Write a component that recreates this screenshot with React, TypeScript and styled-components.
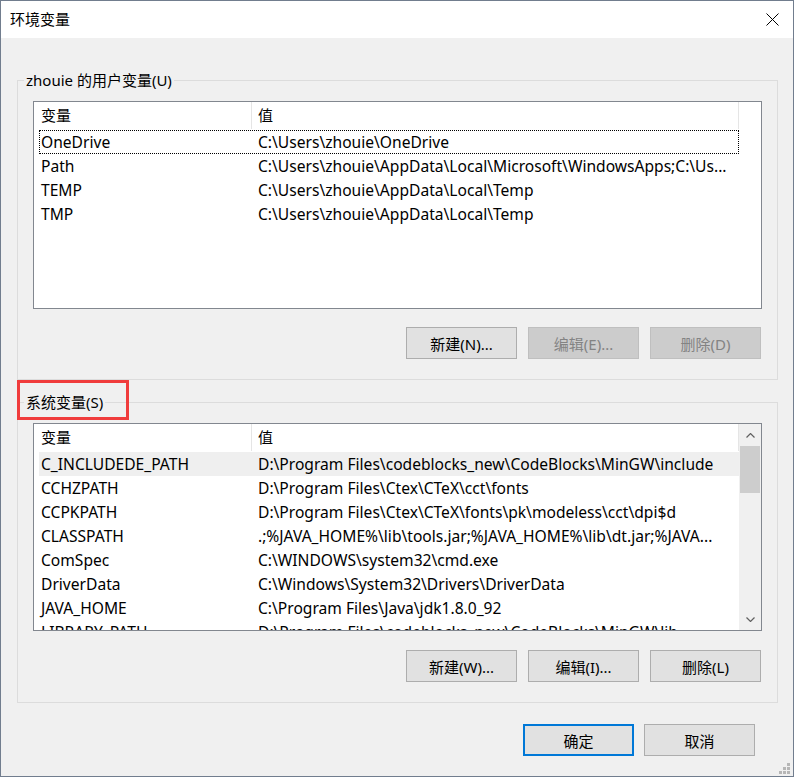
import React from "react";
import styled, { createGlobalStyle, css } from "styled-components";

const Global = createGlobalStyle`
  html, body { margin: 0; padding: 0; background: #f0f0f0; }
  body {
    font-family: "Noto Sans", "Noto Sans CJK SC", sans-serif;
    font-size: 15px;
    color: #000;
  }
  *, *::before, *::after { box-sizing: border-box; }
`;

const Window = styled.div`
  position: relative;
  width: 794px;
  height: 777px;
  border: 1px solid #717d8e;
  background: #f0f0f0;
  display: flex;
  flex-direction: column;
  overflow: hidden;
`;

const TitleBar = styled.div`
  height: 37px;
  flex: none;
  background: #fff;
  display: flex;
  align-items: center;
  justify-content: space-between;
  padding-left: 9px;
`;

const Title = styled.div`
  font-size: 15px;
  line-height: 20px;
  padding-bottom: 1px;
`;

const CloseBox = styled.div`
  width: 41px;
  height: 37px;
  display: flex;
  align-items: center;
  justify-content: center;
  padding-bottom: 1px;
`;

const Body = styled.div`
  flex: 1;
  display: flex;
  flex-direction: column;
  padding: 32px 15px 0 16px;
`;

const Group = styled.fieldset<{ $mt?: number }>`
  margin: ${(p) => p.$mt ?? 0}px 0 0 0;
  padding: 0;
  min-inline-size: 0;
  border: 1px solid #dcdcdc;
`;

const Legend = styled.legend<{ $marked?: boolean }>`
  position: relative;
  margin-left: 6px;
  padding: 0 2px;
  font-size: 15px;
  line-height: 20px;
  ${(p) =>
    p.$marked &&
    css`
      &::after {
        content: "";
        position: absolute;
        left: -7px;
        top: -12px;
        width: 112px;
        height: 40px;
        border: 3px solid #f03c3c;
      }
    `}
`;

const GroupContent = styled.div`
  padding: 11px 15px 20px 15px;
  display: flex;
  flex-direction: column;
`;

const ListView = styled.div`
  height: 208px;
  border: 1px solid #82878f;
  background: #fff;
  display: flex;
  overflow: hidden;
`;

const ListMain = styled.div`
  flex: 1;
  display: flex;
  flex-direction: column;
  overflow: hidden;
`;

const Header = styled.div`
  height: 27px;
  flex: none;
  display: flex;
`;

const HeaderCell = styled.div<{ $w: number; $pl: number }>`
  width: ${(p) => p.$w}px;
  padding-left: ${(p) => p.$pl}px;
  border-right: 1px solid #e5e5e5;
  line-height: 26px;
  white-space: nowrap;
`;

const HeaderGap = styled.div`
  height: 1px;
  flex: none;
`;

const Row = styled.div<{ $focused?: boolean; $selected?: boolean }>`
  flex: none;
  margin-left: 5px;
  width: 700px;
  height: 24px;
  display: flex;
  align-items: center;
  white-space: nowrap;
  font-size: 15.6px;
  line-height: 22px;
  padding-bottom: 1px;
  background: ${(p) => (p.$selected ? "#efefef" : "transparent")};
  ${(p) =>
    p.$focused &&
    css`
      outline: 1px dotted #000;
      outline-offset: -1px;
    `}
`;

const NameCell = styled.div`
  width: 219px;
  flex: none;
  padding-left: 2px;
  overflow: hidden;
`;

const ValueCell = styled.div`
  flex: 1;
  overflow: hidden;
`;

const ScrollBar = styled.div`
  width: 22px;
  flex: none;
  background: #f0f0f0;
  display: flex;
  flex-direction: column;
`;

const ArrowBox = styled.div`
  height: 22px;
  flex: none;
  display: flex;
  align-items: center;
  justify-content: center;
`;

const Track = styled.div`
  flex: 1;
  padding: 0 1px;
`;

const Thumb = styled.div`
  height: 47px;
  background: #cdcdcd;
`;

const ButtonRow = styled.div<{ $mt: number }>`
  margin-top: ${(p) => p.$mt}px;
  padding-right: 1px;
  display: flex;
  justify-content: flex-end;
  gap: 11px;
`;

const Button = styled.div<{ $disabled?: boolean; $default?: boolean }>`
  width: 111px;
  height: 32px;
  display: flex;
  align-items: center;
  justify-content: center;
  background: ${(p) => (p.$disabled ? "#cccccc" : "#e1e1e1")};
  border: ${(p) =>
    p.$default ? "2px solid #0078d7" : p.$disabled ? "1px solid #bfbfbf" : "1px solid #adadad"};
  color: ${(p) => (p.$disabled ? "#838383" : "#000")};
  font-size: 15px;
  white-space: nowrap;
`;

const Footer = styled.div`
  margin-top: 21px;
  margin-right: 23px;
  display: flex;
  justify-content: flex-end;
  gap: 10px;
`;

const Grip = styled.div`
  position: absolute;
  right: 3px;
  bottom: 2px;
  width: 11px;
  height: 11px;
  display: flex;
`;

type Item = { name: string; value: string };

const userVars: Item[] = [
  { name: "OneDrive", value: "C:\\Users\\zhouie\\OneDrive" },
  { name: "Path", value: "C:\\Users\\zhouie\\AppData\\Local\\Microsoft\\WindowsApps;C:\\Us..." },
  { name: "TEMP", value: "C:\\Users\\zhouie\\AppData\\Local\\Temp" },
  { name: "TMP", value: "C:\\Users\\zhouie\\AppData\\Local\\Temp" },
];

const sysVars: Item[] = [
  { name: "C_INCLUDEDE_PATH", value: "D:\\Program Files\\codeblocks_new\\CodeBlocks\\MinGW\\include" },
  { name: "CCHZPATH", value: "D:\\Program Files\\Ctex\\CTeX\\cct\\fonts" },
  { name: "CCPKPATH", value: "D:\\Program Files\\Ctex\\CTeX\\fonts\\pk\\modeless\\cct\\dpi$d" },
  { name: "CLASSPATH", value: ".;%JAVA_HOME%\\lib\\tools.jar;%JAVA_HOME%\\lib\\dt.jar;%JAVA..." },
  { name: "ComSpec", value: "C:\\WINDOWS\\system32\\cmd.exe" },
  { name: "DriverData", value: "C:\\Windows\\System32\\Drivers\\DriverData" },
  { name: "JAVA_HOME", value: "C:\\Program Files\\Java\\jdk1.8.0_92" },
  { name: "LIBRARY_PATH", value: "D:\\Program Files\\codeblocks_new\\CodeBlocks\\MinGW\\lib" },
];

const Chevron = ({ up }: { up?: boolean }) => (
  <svg width="9" height="5" viewBox="0 0 9 5">
    <polyline
      points={up ? "0.5,4.5 4.5,0.5 8.5,4.5" : "0.5,0.5 4.5,4.5 8.5,0.5"}
      fill="none"
      stroke="#606060"
      strokeWidth="1.2"
    />
  </svg>
);

const List = ({
  items,
  focused,
  selected,
  scroll,
}: {
  items: Item[];
  focused?: number;
  selected?: number;
  scroll?: boolean;
}) => (
  <ListView>
    <ListMain>
      <Header>
        <HeaderCell $w={218} $pl={7}>变量</HeaderCell>
        <HeaderCell $w={487} $pl={6}>值</HeaderCell>
      </Header>
      <HeaderGap />
      {items.map((it, i) => (
        <Row key={it.name} $focused={i === focused} $selected={i === selected}>
          <NameCell>{it.name}</NameCell>
          <ValueCell>{it.value}</ValueCell>
        </Row>
      ))}
    </ListMain>
    {scroll && (
      <ScrollBar>
        <ArrowBox>
          <Chevron up />
        </ArrowBox>
        <Track>
          <Thumb />
        </Track>
        <ArrowBox>
          <Chevron />
        </ArrowBox>
      </ScrollBar>
    )}
  </ListView>
);

export default function App() {
  return (
    <>
      <Global />
      <Window>
        <TitleBar>
          <Title>环境变量</Title>
          <CloseBox>
            <svg width="13" height="13" viewBox="0 0 13 13">
              <path d="M0.5 0.5 L12.5 12.5 M12.5 0.5 L0.5 12.5" stroke="#000" strokeWidth="1" />
            </svg>
          </CloseBox>
        </TitleBar>
        <Body>
          <Group>
            <Legend>zhouie 的用户变量(U)</Legend>
            <GroupContent>
              <List items={userVars} focused={0} />
              <ButtonRow $mt={18}>
                <Button>新建(N)...</Button>
                <Button $disabled>编辑(E)...</Button>
                <Button $disabled>删除(D)</Button>
              </ButtonRow>
            </GroupContent>
          </Group>
          <Group $mt={12}>
            <Legend $marked>系统变量(S)</Legend>
            <GroupContent>
              <List items={sysVars} selected={0} scroll />
              <ButtonRow $mt={19}>
                <Button>新建(W)...</Button>
                <Button>编辑(I)...</Button>
                <Button>删除(L)</Button>
              </ButtonRow>
            </GroupContent>
          </Group>
          <Footer>
            <Button $default>确定</Button>
            <Button>取消</Button>
          </Footer>
        </Body>
        <Grip>
          <svg width="11" height="11" viewBox="0 0 11 11">
            <g fill="#b6b6b6">
              <rect x="8" y="0" width="3" height="3" />
              <rect x="4" y="4" width="3" height="3" />
              <rect x="8" y="4" width="3" height="3" />
              <rect x="0" y="8" width="3" height="3" />
              <rect x="4" y="8" width="3" height="3" />
              <rect x="8" y="8" width="3" height="3" />
            </g>
          </svg>
        </Grip>
      </Window>
    </>
  );
}
